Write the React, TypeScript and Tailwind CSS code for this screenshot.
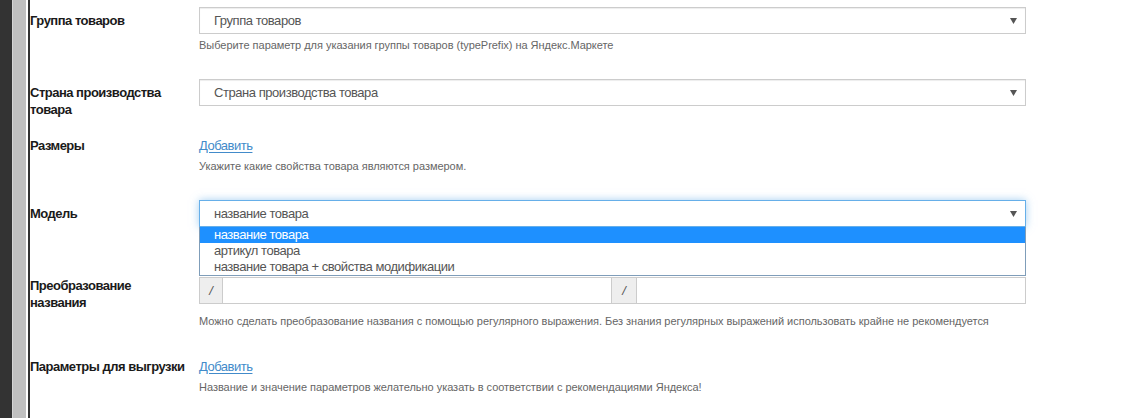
import React from 'react';

const font = { fontFamily: '"Liberation Sans", Arial, sans-serif' };

function Arrow() {
  return (
    <svg width="7" height="6" viewBox="0 0 7 6" className="shrink-0">
      <polygon points="0,0 7,0 3.5,6" fill="#555" />
    </svg>
  );
}

function Select({ value, focused }: { value: string; focused?: boolean }) {
  return (
    <div
      className={`flex h-[27px] items-center justify-between border bg-white pl-[14px] pr-[8px] text-[13px] leading-[17px] tracking-[-0.45px] text-[#555] ${
        focused ? 'border-[#66afe9] shadow-[0_0_8px_rgba(102,175,233,0.6)]' : 'border-[#ccc] shadow-[inset_0_1px_1px_rgba(0,0,0,0.075)]'
      }`}
    >
      <span>{value}</span>
      <Arrow />
    </div>
  );
}

function Help({ children, className = '' }: { children: React.ReactNode; className?: string }) {
  return <p className={`text-[11px] leading-[15px] tracking-[-0.03px] text-[#666] ${className}`}>{children}</p>;
}

function Label({ children, className = '' }: { children: React.ReactNode; className?: string }) {
  return (
    <div className={`w-[169px] shrink-0 whitespace-nowrap text-[13px] font-bold leading-[17px] tracking-[-0.5px] text-[#1a1a1a] ${className}`}>
      {children}
    </div>
  );
}

function AddLink() {
  return (
    <a className="block w-fit cursor-pointer text-[13px] leading-[17px] tracking-[-0.5px] text-[#428bca] underline underline-offset-2">
      Добавить
    </a>
  );
}

const modelOptions = ['название товара', 'артикул товара', 'название товара + свойства модификации'];

export default function App() {
  return (
    <div className="flex h-[418px] w-full overflow-hidden bg-white" style={font}>
      {/* left frame bars */}
      <div className="w-[12px] shrink-0 bg-[#333]" />
      <div className="w-[1px] shrink-0 bg-[#d4d4d4]" />
      <div className="w-[13px] shrink-0 bg-[#c0c0c0]" />
      <div className="w-[2px] shrink-0 bg-white" />
      <div className="w-[2px] shrink-0 bg-[#333]" />

      <div className="flex flex-col pt-[7px] leading-[17px]">
        {/* Группа товаров */}
        <div className="flex">
          <Label className="pt-[5px]">Группа товаров</Label>
          <div className="w-[827px]">
            <Select value="Группа товаров" />
            <Help className="mt-[4px]">Выберите параметр для указания группы товаров (typePrefix) на Яндекс.Маркете</Help>
          </div>
        </div>

        {/* Страна производства */}
        <div className="mt-[26px] flex">
          <Label className="pt-[5px]">
            Страна производства
            <br />
            товара
          </Label>
          <div className="w-[827px]">
            <Select value="Страна производства товара" />
          </div>
        </div>

        {/* Размеры */}
        <div className="mt-[14px] flex">
          <Label className="pt-[5px]">Размеры</Label>
          <div className="w-[827px] pt-[5px]">
            <AddLink />
            <Help className="mt-[5px]">Укажите какие свойства товара являются размером.</Help>
          </div>
        </div>

        {/* Модель */}
        <div className="mt-[26px] flex">
          <Label className="pt-[5px]">Модель</Label>
          <div className="relative z-10 w-[827px]">
            <Select value="название товара" focused />
            <ul className="absolute left-0 top-full w-full border border-t-0 border-[#7f9db9] bg-white text-[13px] leading-[16px] tracking-[-0.45px] text-[#555]">
              {modelOptions.map((o, i) => (
                <li key={o} className={`h-[16px] pl-[14px] ${i === 0 ? 'bg-[#1e90ff] text-white' : ''}`}>
                  {o}
                </li>
              ))}
            </ul>
          </div>
        </div>

        {/* Преобразование названия */}
        <div className="mt-[50px] flex">
          <Label>
            Преобразование
            <br />
            названия
          </Label>
          <div className="w-[827px]">
            <div className="flex h-[27px] text-[13px] text-[#555]">
              <span className="flex w-[24px] shrink-0 items-center justify-center border border-[#ccc] bg-[#eee] italic">/</span>
              <input className="min-w-0 flex-1 border border-l-0 border-[#ccc] bg-white outline-none" />
              <span className="flex w-[25px] shrink-0 items-center justify-center border border-l-0 border-[#ccc] bg-[#eee] italic">/</span>
              <input className="min-w-0 flex-1 border border-l-0 border-[#ccc] bg-white outline-none" />
            </div>
            <Help className="mt-[10px]">
              Можно сделать преобразование названия с помощью регулярного выражения. Без знания регулярных выражений использовать крайне не рекомендуется
            </Help>
          </div>
        </div>

        {/* Параметры для выгрузки */}
        <div className="mt-[24px] flex">
          <Label className="pt-[5px]">Параметры для выгрузки</Label>
          <div className="w-[827px] pt-[5px]">
            <AddLink />
            <Help className="mt-[5px]">Название и значение параметров желательно указать в соответствии с рекомендациями Яндекса!</Help>
          </div>
        </div>
      </div>
    </div>
  );
}
